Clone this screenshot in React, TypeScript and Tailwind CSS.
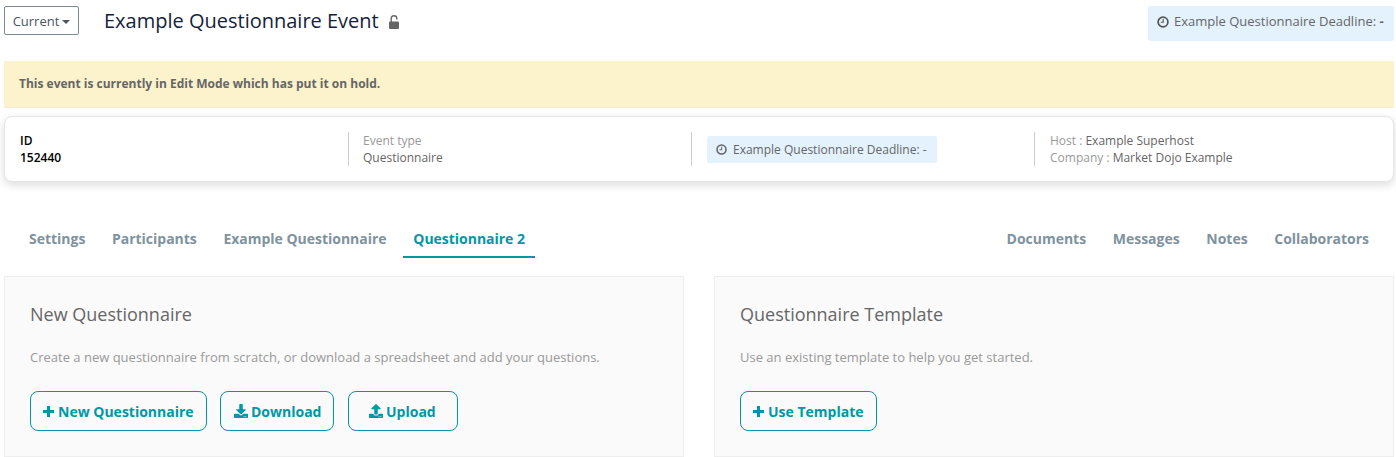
import { FaDownload, FaUpload } from 'react-icons/fa';
import type { ReactNode } from 'react';

const leftTabs = ['Settings', 'Participants', 'Example Questionnaire', 'Questionnaire 2'];
const rightTabs = ['Documents', 'Messages', 'Notes', 'Collaborators'];

function ClockIcon({ className }: { className: string }) {
  return (
    <svg viewBox="0 0 12 12" fill="none" stroke="currentColor" className={className}>
      <circle cx="6" cy="6" r="4.9" strokeWidth="1.7" />
      <path d="M6.2 3v3.3H3.8" strokeWidth="1.1" />
    </svg>
  );
}

function LockIcon({ className }: { className: string }) {
  return (
    <svg viewBox="0 0 10 14" className={className}>
      <rect x="0" y="6.5" width="10" height="7.5" rx="1" fill="currentColor" />
      <path d="M2.2 7V3.5a2.8 2.8 0 0 1 5.6 0V4.6" fill="none" stroke="currentColor" strokeWidth="1.4" />
    </svg>
  );
}

function PlusIcon({ className }: { className: string }) {
  return (
    <svg viewBox="0 0 11 11" fill="none" stroke="currentColor" strokeWidth="3" className={className}>
      <path d="M5.5 0v11M0 5.5h11" />
    </svg>
  );
}

function Tab({ label, active }: { label: string; active?: boolean }) {
  return (
    <div
      className={
        active
          ? 'h-[38px] px-[10px] pt-[9px] text-[14px] leading-[20px] font-bold tracking-[-0.02px] text-[#0097a7] border-b-2 border-[#0097a7]'
          : 'h-[38px] px-[10px] pt-[9px] text-[14px] leading-[20px] font-bold tracking-[-0.02px] text-[#7e929f]'
      }
    >
      {label}
    </div>
  );
}

function ActionButton({ icon, label, className }: { icon: ReactNode; label: string; className: string }) {
  return (
    <button
      className={`h-[40px] flex items-center rounded-[8px] border border-[#0097a7] text-[14px] font-bold text-[#0097a7] ${className}`}
    >
      {icon}
      {label}
    </button>
  );
}

export default function App() {
  return (
    <div className="w-[1396px] h-[457px] overflow-hidden bg-white pl-[4px] pr-[2px] font-['Open_Sans',sans-serif]">
      {/* header */}
      <div className="h-[61px] flex items-start">
        <button className="mt-[6px] w-[75px] h-[29px] pt-[2px] flex items-center justify-center gap-[3px] border border-[#7d8a96] rounded-[2px] text-[13px] text-[#4a5560]">
          Current
          <span className="border-x-[4px] border-x-transparent border-t-[4px] border-t-[#4a5560]" />
        </button>
        <h1 className="ml-[25px] mt-[7px] text-[20px] leading-[28px] font-normal text-[#14233c]">Example Questionnaire Event</h1>
        <LockIcon className="ml-[10px] mt-[15px] text-[#666] w-[10px] h-[14px]" />
        <div className="ml-auto mt-[6px] w-[246px] h-[35px] flex items-center gap-[5px] pl-[9px] pb-[4px] bg-[#e3f2fd] rounded-[2px] text-[13px] text-[#666]">
          <ClockIcon className="w-[12px] h-[12px] text-[#555]" />
          <span>
            Example Questionnaire Deadline: <b className="font-bold">-</b>
          </span>
        </div>
      </div>

      {/* hold banner */}
      <div className="h-[47px] flex items-center pl-[15px] bg-[#fcf3cd] border-b border-[#f5ead9] text-[12px] font-bold text-[#666]">
        This event is currently in Edit Mode which has put it on hold.
      </div>

      {/* summary card */}
      <div className="mt-[8px] h-[66px] grid grid-cols-[343px_343px_343px_1fr] items-center rounded-[8px] border border-[#e6e6e6] bg-white shadow-[0_3px_8px_rgba(0,0,0,0.14)] text-[12px] leading-[17px]">
        <div className="pl-[15px] h-[34px] font-[550] text-black">
          <div>ID</div>
          <div>152440</div>
        </div>
        <div className="pl-[14px] h-[34px] border-l border-[#ccc]">
          <div className="text-[#999]">Event type</div>
          <div className="text-[#666]">Questionnaire</div>
        </div>
        <div className="pl-[15px] h-[34px] flex items-center border-l border-[#ccc]">
          <div className="w-[230px] h-[27px] flex items-center gap-[6px] pl-[9px] bg-[#e3f2fd] rounded-[2px] text-[#666]">
            <ClockIcon className="w-[11px] h-[11px]" />
            <span>Example Questionnaire Deadline: -</span>
          </div>
        </div>
        <div className="pl-[15px] h-[34px] border-l border-[#ccc] text-[#666]">
          <div>
            <span className="text-[#999]">Host : </span>Example Superhost
          </div>
          <div>
            <span className="text-[#999]">Company : </span>Market Dojo Example
          </div>
        </div>
      </div>

      {/* tabs */}
      <div className="mt-[38px] h-[38px] pl-[15px] pr-[15px] flex justify-between">
        <div className="flex gap-[6.7px]">
          {leftTabs.map((t) => (
            <Tab key={t} label={t} active={t === 'Questionnaire 2'} />
          ))}
        </div>
        <div className="flex gap-[6.7px]">
          {rightTabs.map((t) => (
            <Tab key={t} label={t} />
          ))}
        </div>
      </div>

      {/* panels */}
      <div className="mt-[18px] grid grid-cols-[680px_680px] gap-[30px]">
        <div className="h-[181px] px-[25px] pt-[25px] bg-[#fafafa] border border-[#eee]">
          <h2 className="text-[18px] leading-[24px] font-normal text-[#666]">New Questionnaire</h2>
          <p className="mt-[22px] text-[13px] leading-[18px] text-[#999]">
            Create a new questionnaire from scratch, or download a spreadsheet and add your questions.
          </p>
          <div className="mt-[25px] flex">
            <ActionButton icon={<PlusIcon className="w-[11px] h-[11px] mr-[4px]" />} label="New Questionnaire" className="w-[177px] pl-[12px]" />
            <ActionButton icon={<FaDownload className="w-[14px] h-[14px] mr-[3px]" />} label="Download" className="ml-[13px] w-[114px] pl-[13px]" />
            <ActionButton icon={<FaUpload className="w-[14px] h-[14px] mr-[3px]" />} label="Upload" className="ml-[14px] w-[110px] pl-[20px]" />
          </div>
        </div>
        <div className="h-[181px] px-[25px] pt-[25px] bg-[#fafafa] border border-[#eee]">
          <h2 className="text-[18px] leading-[24px] font-normal text-[#666]">Questionnaire Template</h2>
          <p className="mt-[22px] text-[13px] leading-[18px] text-[#999]">Use an existing template to help you get started.</p>
          <div className="mt-[25px] flex">
            <ActionButton icon={<PlusIcon className="w-[11px] h-[11px] mr-[4px]" />} label="Use Template" className="w-[137px] pl-[12px]" />
          </div>
        </div>
      </div>
    </div>
  );
}
